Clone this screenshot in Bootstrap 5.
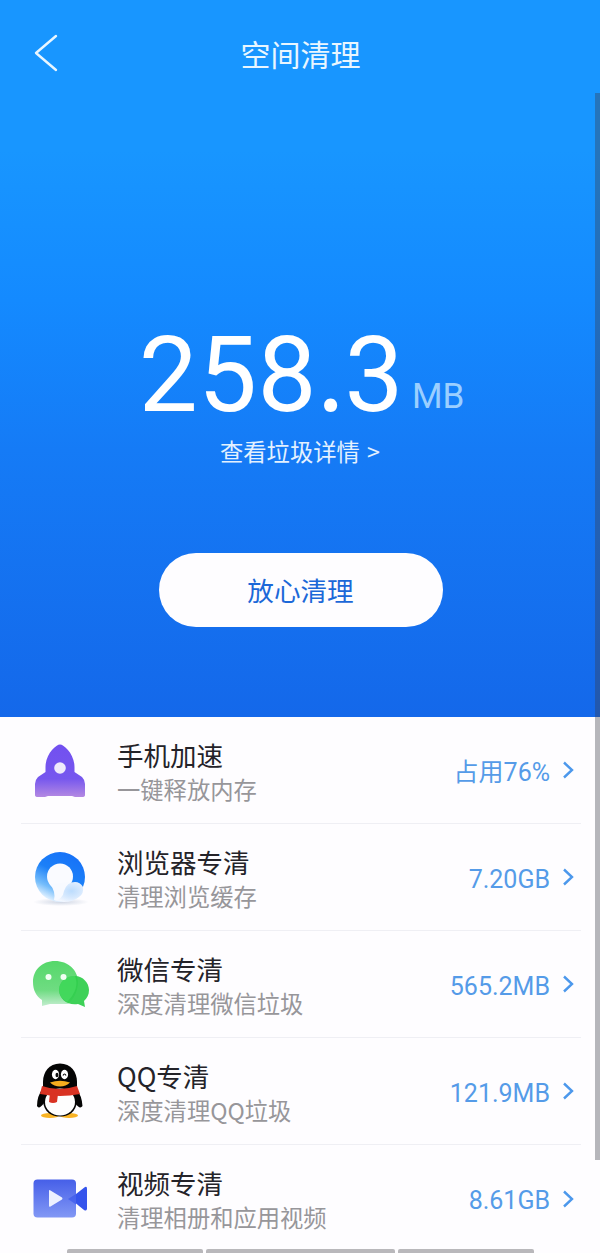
<!DOCTYPE html>
<html lang="zh-CN">
  <head>
    <meta charset="UTF-8" />
    <meta name="viewport" content="width=device-width, initial-scale=1.0" />
    <link
      href="https://cdn.jsdelivr.net/npm/bootstrap@5.3.0/dist/css/bootstrap.min.css"
      rel="stylesheet"
    />
    <title>空间清理</title>
    <style>
      body {
        font-family: "Noto Sans CJK SC", sans-serif;
        background: #fefdff;
        height: 1253px;
        overflow: hidden;
      }
      .hero {
        height: 717px;
        background: linear-gradient(#1896ff 0, #1896ff 150px, #148aff 300px, #157bf6 450px, #1468ea 717px);
      }
      .topbar {
        height: 106px;
        padding: 0 34px;
      }
      .topbar h1 {
        font-size: 30px;
        line-height: 40px;
        font-weight: 400;
        color: #e9f6ff;
        padding-left: 1px;
      }
      .side {
        width: 26px;
      }
      .total {
        height: 100px;
        margin-top: 220px;
        padding-left: 3px;
        line-height: 100px;
        font-family: Roboto, "Noto Sans CJK SC", sans-serif;
      }
      .amount {
        font-size: 105px;
        letter-spacing: 0.4px;
      }
      .dot {
        font-family: "Noto Sans CJK SC", sans-serif;
        font-size: 98px;
        line-height: 1px;
      }
      .unit {
        font-size: 35px;
        line-height: 1px;
        vertical-align: 3px;
        color: #9bcfff;
        margin-left: 8px;
      }
      .detail {
        font-size: 23.3px;
        line-height: 34px;
        margin-top: 8px;
        color: #e3f1ff;
        word-spacing: 2px;
      }
      .btn-clean {
        width: 284px;
        height: 74px;
        margin-top: 85px;
        margin-left: 1px;
        font-size: 26.6px;
        color: #1c68d8;
        background: #fefdff;
      }
      .items {
        padding: 0 19px 0 21px;
      }
      .item {
        height: 106.9px;
        border-bottom: 1px solid #efeff4;
        padding: 3px 6px 0 9px;
      }
      .item svg.pic {
        width: 64px;
        height: 64px;
        margin-right: 23px;
      }
      .name {
        font-size: 26.5px;
        line-height: 34px;
        margin-top: 1px;
        color: #242329;
      }
      .desc {
        font-size: 23.3px;
        line-height: 34px;
        color: #97969a;
      }
      .val {
        font-family: Roboto, "Noto Sans CJK SC", sans-serif;
        font-size: 25px;
        line-height: 34px;
        color: #559be8;
        margin-right: 12px;
        padding-top: 3px;
      }
      .go {
        margin-bottom: 2px;
      }
      .thumb {
        right: 0;
        top: 93px;
        width: 5px;
        height: 1067px;
        background: rgba(60, 60, 70, 0.37);
      }
      .homebar {
        left: 67px;
        bottom: 0;
        width: 467px;
        gap: 3px;
      }
      .homebar span {
        height: 4px;
        background: #b9b8bb;
        border-radius: 2px 2px 0 0;
      }
    </style>
  </head>
  <body class="position-relative">
    <header class="hero text-white d-flex flex-column align-items-center">
      <div class="topbar w-100 d-flex align-items-center justify-content-between">
        <svg class="side" height="40" viewBox="0 0 26 40" fill="none" stroke="#e9f6ff" stroke-width="2.4" stroke-linecap="round" stroke-linejoin="round">
          <path d="M22 3 L2 20 L22 37" />
        </svg>
        <h1 class="m-0">空间清理</h1>
        <div class="side"></div>
      </div>
      <div class="total text-nowrap">
        <span class="amount">258<span class="dot">.</span>3</span><span class="unit">MB</span>
      </div>
      <div class="detail">查看垃圾详情 &gt;</div>
      <button type="button" class="btn btn-clean rounded-pill border-0 p-0">放心清理</button>
    </header>

    <main class="items">
      <div class="item d-flex align-items-center">
        <svg class="pic" viewBox="0 0 64 64">
          <defs>
            <linearGradient id="rocket" x1="0" y1="0" x2="0" y2="1">
              <stop offset="0" stop-color="#7250f0" />
              <stop offset=".65" stop-color="#7657ee" />
              <stop offset="1" stop-color="#b489e2" />
            </linearGradient>
          </defs>
          <path fill="url(#rocket)" d="M30 5.500C26 5.500 15.500 15 15.500 28V33L8 38Q5 41 5 45V56Q5 58 8 58H15L18 57H42L45 58H52Q55 58 55 56V45Q55 41 52 38L44.500 33V28C44.500 15 34 5.500 30 5.500Z" />
          <circle cx="30" cy="29" r="5.800" fill="#efeafb" />
        </svg>
        <div class="flex-grow-1">
          <div class="name">手机加速</div>
          <div class="desc">一键释放内存</div>
        </div>
        <span class="val">占用76%</span>
        <svg class="go" width="13" height="18" viewBox="0 0 13 18" fill="none" stroke="#4c98ec" stroke-width="2.4"><path d="M2 1.500 L10 9 L2 16.500" /></svg>
      </div>

      <div class="item d-flex align-items-center">
        <svg class="pic" viewBox="0 0 64 64">
          <defs>
            <linearGradient id="ring" x1=".75" y1="0" x2=".25" y2="1">
              <stop offset="0" stop-color="#1670f8" />
              <stop offset=".45" stop-color="#1c80f8" />
              <stop offset=".75" stop-color="#75bdfb" />
              <stop offset=".95" stop-color="#e4f2ff" />
            </linearGradient>
            <radialGradient id="cloud" cx=".6" cy=".45" r=".6">
              <stop offset="0" stop-color="#bcdcfd" />
              <stop offset=".6" stop-color="#d9eafe" />
              <stop offset="1" stop-color="#f3f7ff" />
            </radialGradient>
            <radialGradient id="glow">
              <stop offset="0" stop-color="#cfd6e4" />
              <stop offset="1" stop-color="#cfd6e4" stop-opacity="0" />
            </radialGradient>
          </defs>
          <ellipse cx="31" cy="56" rx="28" ry="4" fill="url(#glow)" />
          <circle cx="30" cy="31" r="25" fill="url(#ring)" />
          <circle cx="30" cy="30.500" r="13" fill="#fafbff" />
          <path fill="#f8faff" d="M20 38Q26 46 24 54Q34 58 44 50L41 36Z" />
          <path fill="url(#cloud)" d="M24 55Q33 53 34 45Q37 36 45 36Q50 36 53 41Q54 48 49 51Q43 56 34 56Z" />
        </svg>
        <div class="flex-grow-1">
          <div class="name">浏览器专清</div>
          <div class="desc">清理浏览缓存</div>
        </div>
        <span class="val">7.20GB</span>
        <svg class="go" width="13" height="18" viewBox="0 0 13 18" fill="none" stroke="#4c98ec" stroke-width="2.4"><path d="M2 1.500 L10 9 L2 16.500" /></svg>
      </div>

      <div class="item d-flex align-items-center">
        <svg class="pic" viewBox="0 0 64 64">
          <defs>
            <linearGradient id="bubble" x1="0" y1="0" x2="0" y2="1">
              <stop offset="0" stop-color="#55d86a" />
              <stop offset=".65" stop-color="#6fdc82" />
              <stop offset="1" stop-color="#c3edcf" />
            </linearGradient>
          </defs>
          <path fill="url(#bubble)" d="M25 8C12 8 3 17 3 29C3 37 6 43 12 47V53L20 51H38C44 46 48 38 48 29C48 17 38 8 25 8Z" />
          <path fill="#2fce4b" fill-opacity=".93" d="M45 23C53 23 59 30 59 37C59 42 57 45 54 48L55 54L48 51C38 53 29 46 29 37C29 29 36 23 45 23Z" />
          <path fill="#4fe267" fill-opacity=".5" d="M45 23Q50 36 37 49Q29 44 29 37C29 29 36 23 45 23Z" />
          <circle cx="18.500" cy="24" r="3" fill="#f1fff3" />
          <circle cx="33.500" cy="24" r="3" fill="#f1fff3" />
        </svg>
        <div class="flex-grow-1">
          <div class="name">微信专清</div>
          <div class="desc">深度清理微信垃圾</div>
        </div>
        <span class="val">565.2MB</span>
        <svg class="go" width="13" height="18" viewBox="0 0 13 18" fill="none" stroke="#4c98ec" stroke-width="2.4"><path d="M2 1.500 L10 9 L2 16.500" /></svg>
      </div>

      <div class="item d-flex align-items-center">
        <svg class="pic" viewBox="0 0 64 64">
          <ellipse cx="20" cy="55.500" rx="9" ry="2.600" fill="#f9b324" />
          <ellipse cx="39" cy="55.500" rx="9" ry="2.600" fill="#f9b324" />
          <path d="M13 28Q7 36 7 46Q9 50 14 43ZM46 28Q52 36 52.500 46Q50 50 45 43Z" fill="#050505" />
          <path d="M30 3.500C19 3.500 13 12 13 22V42Q15 56 30 56.500Q45 56 47 42V22C47 12 41 3.500 30 3.500Z" fill="#050505" />
          <ellipse cx="30" cy="42" rx="15" ry="13.500" fill="#fefefe" />
          <path d="M12 26Q29 32 47 26L50 34Q30 38 10 34Z" fill="#d93323" />
          <path d="M20 33L28 34L27 42Q23 44 19 42Z" fill="#d93323" />
          <ellipse cx="25.500" cy="14.500" rx="3.600" ry="4.700" fill="#fff" />
          <ellipse cx="34.500" cy="14.500" rx="3.600" ry="4.700" fill="#fff" />
          <ellipse cx="27" cy="15" rx="1.500" ry="2.200" fill="#111" />
          <path d="M33 15.500Q34.500 12.500 36 15.500" fill="none" stroke="#111" stroke-width="1.200" />
          <path d="M20 22.500Q30 19 40 22.500Q36 26.500 30 26.500Q24 26.500 20 22.500Z" fill="#f6ad1e" />
        </svg>
        <div class="flex-grow-1">
          <div class="name">QQ专清</div>
          <div class="desc">深度清理QQ垃圾</div>
        </div>
        <span class="val">121.9MB</span>
        <svg class="go" width="13" height="18" viewBox="0 0 13 18" fill="none" stroke="#4c98ec" stroke-width="2.4"><path d="M2 1.500 L10 9 L2 16.500" /></svg>
      </div>

      <div class="item border-0 d-flex align-items-center">
        <svg class="pic" viewBox="0 0 64 64">
          <defs>
            <linearGradient id="film" x1="0" y1="0" x2="0" y2="1">
              <stop offset="0" stop-color="#465fe8" />
              <stop offset="1" stop-color="#8298f5" />
            </linearGradient>
          </defs>
          <rect x="3.500" y="11.500" width="42.500" height="38" rx="4" fill="url(#film)" />
          <path fill="#3554ec" d="M46 26L55 19Q57 18 57 20.500V40.500Q57 43.500 54 42L46 35.500Z" />
          <path fill="#3554ec" fill-opacity=".6" d="M46 26L38 31L46 36.500Z" />
          <path fill="#edf1ff" d="M19 23Q19 21.500 20.500 22.500L32 29.500Q33 30.500 32 31.500L20.500 38.500Q19 39.500 19 37.500Z" />
        </svg>
        <div class="flex-grow-1">
          <div class="name">视频专清</div>
          <div class="desc">清理相册和应用视频</div>
        </div>
        <span class="val">8.61GB</span>
        <svg class="go" width="13" height="18" viewBox="0 0 13 18" fill="none" stroke="#4c98ec" stroke-width="2.4"><path d="M2 1.500 L10 9 L2 16.500" /></svg>
      </div>
    </main>

    <div class="thumb position-absolute"></div>
    <div class="homebar position-absolute d-flex">
      <span style="width: 136px"></span>
      <span style="width: 189px"></span>
      <span style="width: 136px"></span>
    </div>
    <script src="https://cdn.jsdelivr.net/npm/bootstrap@5.3.0/dist/js/bootstrap.bundle.min.js"></script>
  </body>
</html>
